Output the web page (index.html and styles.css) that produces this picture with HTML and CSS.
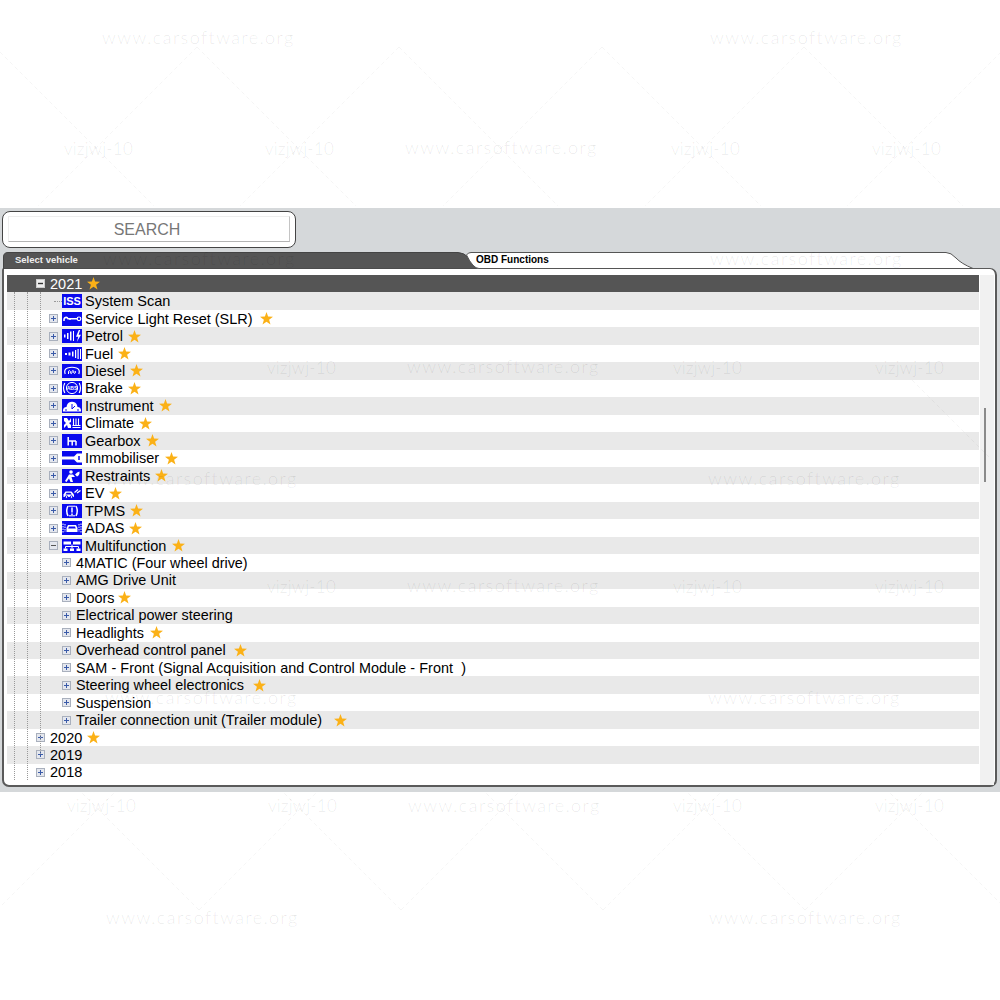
FILE: index.html
```html
<!DOCTYPE html>
<html lang="en">
<head>
<meta charset="utf-8">
<title>OBD vehicle tree</title>
<link rel="stylesheet" href="styles.css">
</head>
<body>
<svg class="sprites" width="0" height="0" aria-hidden="true">
  <symbol id="star" viewBox="0 0 13 13"><polygon points="6.5,0 8.1,4.6 13,4.8 9.1,7.8 10.5,12.5 6.5,9.7 2.5,12.5 3.9,7.8 0,4.8 4.9,4.6"/></symbol>
  <symbol id="plus" viewBox="0 0 9 9"><rect x=".5" y=".5" width="8" height="8" fill="#e4e7ee" stroke="#a9b0bd"/><path d="M2 4.5h5M4.5 2v5" stroke="#3a5aa8" fill="none"/></symbol>
  <symbol id="minus" viewBox="0 0 9 9"><rect x=".5" y=".5" width="8" height="8" fill="#e4e7ee" stroke="#a9b0bd"/><path d="M2 4.5h5" stroke="#555" fill="none"/></symbol>
  <symbol id="minusw" viewBox="0 0 9 9"><rect x=".5" y=".5" width="8" height="8" fill="#eee" stroke="#ccc"/><path d="M2 4.5h5" stroke="#333" stroke-width="1.4" fill="none"/></symbol>
</svg>

<main class="app">
  <div class="search-box"><div class="search-input">SEARCH</div></div>

  <div class="tabs">
    <div class="tab tab-active">
      <svg class="tab-shape" width="478" height="17" viewBox="0 0 478 17"><path d="M.5 17V5Q.5 .5 5 .5H455Q461 .5 466 6T478 17Z" fill="#555" stroke="#444"/></svg>
      <span class="tab-label">Select vehicle</span>
    </div>
    <div class="tab tab-other">
      <svg class="tab-shape" width="508" height="17" viewBox="0 0 508 17"><path d="M.5 3Q2 .5 5 .5H480Q485 .5 490 6T507 16.5H13Q7 16.5 .5 3Z" fill="#fff" stroke="#555"/></svg>
      <span class="tab-label">OBD Functions</span>
    </div>
  </div>

  <section class="panel">
    <div class="tree">
      <div class="guide guide-1"></div>
      <div class="guide guide-2"></div>
      <div class="guide guide-3"></div>

      <div class="row year dark"><svg class="exp"><use href="#minusw"/></svg><span>2021</span><svg class="star"><use href="#star"/></svg></div>

      <div class="row cat alt"><i class="stub"></i><svg class="ico" viewBox="0 0 20 14"><rect width="20" height="14" fill="#0a0aee"/><text x="10" y="11.3" class="ico-txt">ISS</text></svg><span>System Scan</span></div>

      <div class="row cat"><svg class="exp"><use href="#plus"/></svg><svg class="ico" viewBox="0 0 20 14"><rect width="20" height="14" fill="#0a0aee"/><path d="M2 9C1.500 5 5 4.500 6 6.800H15M8 6.800V8" stroke="#fff" stroke-width="1.500" fill="none"/><circle cx="17" cy="6.800" r="1.800" fill="none" stroke="#fff" stroke-width="1.200"/></svg><span>Service Light Reset (SLR)</span><svg class="star g6"><use href="#star"/></svg></div>

      <div class="row cat alt"><svg class="exp"><use href="#plus"/></svg><svg class="ico" viewBox="0 0 20 14"><rect width="20" height="14" fill="#0a0aee"/><path d="M2 5.500h1.500v3H2zM5 4h1.500v6H5zM8 2.500h1.500v9H8zM11 2h1v10h-1z" fill="#fff"/><path d="M16.800 1 14 7.800h2.300L14.800 13 19 5.800h-2.400L18.200 1z" fill="#fff"/></svg><span>Petrol</span><svg class="star g5"><use href="#star"/></svg></div>

      <div class="row cat"><svg class="exp"><use href="#plus"/></svg><svg class="ico" viewBox="0 0 20 14"><rect width="20" height="14" fill="#0a0aee"/><path d="M3 6h2v2H3zM6.500 5.500h2v3h-2zM10 4.500h1.500v5H10zM13 3h1.200v8H13zM15.500 2h1.200v10h-1.200zM18 2h1v10h-1z" fill="#fff"/></svg><span>Fuel</span><svg class="star g5"><use href="#star"/></svg></div>

      <div class="row cat alt"><svg class="exp"><use href="#plus"/></svg><svg class="ico" viewBox="0 0 20 14"><rect width="20" height="14" fill="#0a0aee"/><path d="M3.200 10Q1.500 5.500 5.500 4Q10 2.500 14.500 4Q18.500 5.500 16.800 10" stroke="#fff" stroke-width="1.200" fill="none"/><path d="M6.500 10V7.200Q7.500 5.800 8.300 7.200V9Q9.200 10.200 10 9V7.200Q11 5.800 11.800 7.200V9Q12.500 10 13.300 9V7" stroke="#fff" fill="none"/></svg><span>Diesel</span><svg class="star g5"><use href="#star"/></svg></div>

      <div class="row cat"><svg class="exp"><use href="#plus"/></svg><svg class="ico" viewBox="0 0 20 14"><rect width="20" height="14" fill="#0a0aee"/><circle cx="10" cy="7" r="5.600" fill="none" stroke="#fff"/><path d="M2.800 2Q.200 7 2.800 12M17.200 2Q19.800 7 17.200 12" stroke="#fff" stroke-width="1.200" fill="none"/><text x="10" y="9" class="ico-abs">ABS</text></svg><span>Brake</span><svg class="star g5"><use href="#star"/></svg></div>

      <div class="row cat alt"><svg class="exp"><use href="#plus"/></svg><svg class="ico" viewBox="0 0 20 14"><rect width="20" height="14" fill="#0a0aee"/><path d="M1 12.500V11A3.500 3.500 0 0 1 4.500 8L5 6A5.500 5.500 0 0 1 15 6L15.500 8A3.500 3.500 0 0 1 19 11V12.500Z" fill="#fff"/><path d="M4 12V10M10 10V5M10 10l3-3M16 12V10" stroke="#0a0aee" fill="none"/></svg><span>Instrument</span><svg class="star g5"><use href="#star"/></svg></div>

      <div class="row cat"><svg class="exp"><use href="#plus"/></svg><svg class="ico" viewBox="0 0 20 14"><rect width="20" height="14" fill="#0a0aee"/><path d="M2 2h3l2 3 2-3v4L7 7l2 2v3H6L5 9l-3 3V9l2-2-2-2z" fill="#fff"/><path d="M11.500 2.500v7M14 2.500v7M16.500 2.500v7M10.500 11.500h8M10.500 9.500h8" stroke="#fff" stroke-width="1.100" fill="none"/></svg><span>Climate</span><svg class="star g5"><use href="#star"/></svg></div>

      <div class="row cat alt"><svg class="exp"><use href="#plus"/></svg><svg class="ico" viewBox="0 0 20 14"><rect width="20" height="14" fill="#0a0aee"/><path d="M6.200 3v8.500M6.200 7H14M10.200 7v4.500M14 7v4.500" stroke="#fff" stroke-width="1.500" fill="none"/></svg><span>Gearbox</span><svg class="star g5"><use href="#star"/></svg></div>

      <div class="row cat"><svg class="exp"><use href="#plus"/></svg><svg class="ico" viewBox="0 0 20 14"><rect width="20" height="14" fill="#0a0aee"/><path d="M0 5.500H12L15 2.500H20V11.500H15L12 8.500H0Z" fill="#fff"/><path d="M17 5v4" stroke="#0a0aee" stroke-width="1.500"/></svg><span>Immobiliser</span><svg class="star g6b"><use href="#star"/></svg></div>

      <div class="row cat alt"><svg class="exp"><use href="#plus"/></svg><svg class="ico" viewBox="0 0 20 14"><rect width="20" height="14" fill="#0a0aee"/><circle cx="9" cy="3" r="1.800" fill="#fff"/><path d="M7 5.500H11L13 8H9.500L11 13H8.500L7 9.500 4.500 13 3 12 5.500 8Z" fill="#fff"/><path d="M13 5.500Q15 3 17.500 2.500Q18 6 15 7.500Z" fill="#fff"/></svg><span>Restraints</span><svg class="star g5"><use href="#star"/></svg></div>

      <div class="row cat"><svg class="exp"><use href="#plus"/></svg><svg class="ico" viewBox="0 0 20 14"><rect width="20" height="14" fill="#0a0aee"/><path d="M1.500 11V8.500L3.500 5.500H9.500L12 8.500V11Z" fill="#fff"/><path d="M4.500 6.800H8.500L9.800 8.500H3.500Z" fill="#0a0aee"/><circle cx="4.500" cy="11" r="1.300" fill="#fff" stroke="#0a0aee"/><circle cx="9.500" cy="11" r="1.300" fill="#fff" stroke="#0a0aee"/><path d="M12.500 6.500L16 3.500M15 7L18.500 4.500" stroke="#fff" stroke-width="1.300" fill="none"/></svg><span>EV</span><svg class="star g5"><use href="#star"/></svg></div>

      <div class="row cat alt"><svg class="exp"><use href="#plus"/></svg><svg class="ico" viewBox="0 0 20 14"><rect width="20" height="14" fill="#0a0aee"/><path d="M6 2Q3.500 7 6 12M14 2Q16.500 7 14 12" stroke="#fff" stroke-width="1.500" fill="none"/><path d="M6.500 2.200H13.500M7 11.800H13" stroke="#fff" fill="none"/><path d="M10 3.500v5M10 9.500v1.500" stroke="#fff" stroke-width="1.500" fill="none"/></svg><span>TPMS</span><svg class="star g5"><use href="#star"/></svg></div>

      <div class="row cat"><svg class="exp"><use href="#plus"/></svg><svg class="ico" viewBox="0 0 20 14"><rect width="20" height="14" fill="#0a0aee"/><path d="M6 4H14L15.500 7V11H4.500V7Z" fill="#fff"/><path d="M7 5.500H13L13.800 7.500H6.200Z" fill="#0a0aee"/><path d="M1 2.500V11.500M3 3V11M17 3V11M19 2.500V11.500" stroke="#fff" stroke-dasharray="1.500 1" fill="none"/></svg><span>ADAS</span><svg class="star g4"><use href="#star"/></svg></div>

      <div class="row cat alt"><svg class="exp"><use href="#minus"/></svg><svg class="ico" viewBox="0 0 20 14"><rect width="20" height="14" fill="#0a0aee"/><path d="M1.500 2.500H9V5.500H1.500zM11 2.500H18.500V5.500H11zM1.500 9.500H5.500V12H1.500zM8 9.500H12V12H8zM14.500 9.500H18.500V12H14.500z" fill="#fff"/><path d="M3.500 9.500V7.500H16.500V9.500M10 5.500V9.500" stroke="#fff" fill="none"/></svg><span>Multifunction</span><svg class="star g6b"><use href="#star"/></svg></div>

      <div class="row sub"><svg class="exp"><use href="#plus"/></svg><span>4MATIC (Four wheel drive)</span></div>
      <div class="row sub alt"><svg class="exp"><use href="#plus"/></svg><span>AMG Drive Unit</span></div>
      <div class="row sub"><svg class="exp"><use href="#plus"/></svg><span>Doors</span><svg class="star g4"><use href="#star"/></svg></div>
      <div class="row sub alt"><svg class="exp"><use href="#plus"/></svg><span>Electrical power steering</span></div>
      <div class="row sub"><svg class="exp"><use href="#plus"/></svg><span>Headlights</span><svg class="star g6b"><use href="#star"/></svg></div>
      <div class="row sub alt"><svg class="exp"><use href="#plus"/></svg><span>Overhead control panel</span><svg class="star g8"><use href="#star"/></svg></div>
      <div class="row sub sam"><svg class="exp"><use href="#plus"/></svg><span>SAM - Front (Signal Acquisition and Control Module - Front&nbsp; )</span></div>
      <div class="row sub alt"><svg class="exp"><use href="#plus"/></svg><span>Steering wheel electronics</span><svg class="star g9"><use href="#star"/></svg></div>
      <div class="row sub"><svg class="exp"><use href="#plus"/></svg><span>Suspension</span></div>
      <div class="row sub alt"><svg class="exp"><use href="#plus"/></svg><span>Trailer connection unit (Trailer module)</span><svg class="star g12"><use href="#star"/></svg></div>

      <div class="row year"><svg class="exp"><use href="#plus"/></svg><span>2020</span><svg class="star"><use href="#star"/></svg></div>
      <div class="row year alt"><svg class="exp"><use href="#plus"/></svg><span>2019</span></div>
      <div class="row year"><svg class="exp"><use href="#plus"/></svg><span>2018</span></div>
    </div>
    <div class="scrollbar"><div class="thumb"></div></div>
  </section>
</main>

<svg class="watermark" width="1000" height="1000" viewBox="0 0 1000 1000" aria-hidden="true">
  <path class="wm-line" d="M197 47L38 206M197 47L356 206M399 47L240 206M399 47L558 206M602 47L443 206M602 47L761 206M804 47L645 206M804 47L963 206M-5 47L154 206M1006 47L847 206M199 910L81 792M199 910L317 792M401 910L283 792M401 910L519 792M603 910L485 792M603 910L721 792M805 910L687 792M805 910L923 792M-3 910L115 792M1007 910L889 792M912 380L990 458"/>
  <g class="wm-a">
    <text x="102" y="44">www.carsoftware.org</text><text x="710" y="44">www.carsoftware.org</text>
    <text x="405" y="154">www.carsoftware.org</text><text x="103" y="265">www.carsoftware.org</text>
    <text x="710" y="265">www.carsoftware.org</text><text x="407" y="373">www.carsoftware.org</text>
    <text x="105" y="485">www.carsoftware.org</text><text x="708" y="485">www.carsoftware.org</text>
    <text x="407" y="592">www.carsoftware.org</text><text x="105" y="704">www.carsoftware.org</text>
    <text x="708" y="704">www.carsoftware.org</text><text x="408" y="812">www.carsoftware.org</text>
    <text x="106" y="924">www.carsoftware.org</text><text x="709" y="924">www.carsoftware.org</text>
  </g>
  <g class="wm-b">
    <text x="64" y="155">vizjwj-10</text><text x="265" y="155">vizjwj-10</text><text x="671" y="155">vizjwj-10</text><text x="872" y="155">vizjwj-10</text>
    <text x="267" y="374">vizjwj-10</text><text x="673" y="374">vizjwj-10</text><text x="875" y="374">vizjwj-10</text>
    <text x="267" y="593">vizjwj-10</text><text x="673" y="593">vizjwj-10</text><text x="875" y="593">vizjwj-10</text>
    <text x="67" y="812">vizjwj-10</text><text x="268" y="812">vizjwj-10</text><text x="673" y="812">vizjwj-10</text><text x="875" y="812">vizjwj-10</text>
  </g>
</svg>
</body>
</html>
```
FILE: styles.css
```css
* { box-sizing: border-box; }
html, body { margin: 0; padding: 0; background: #fff; }
body { position: relative; width: 1000px; height: 1000px; overflow: hidden; font-family: "Liberation Sans", Arial, sans-serif; color: #000; }
.sprites { position: absolute; }

.app { margin-top: 208px; height: 584px; background: #d5d8da; padding-top: 3px; display: flex; flex-direction: column; }

.search-box { margin-left: 2px; width: 294px; height: 37px; border: 1.5px solid #444; border-radius: 8px; background: #fff; padding: 4px 5px; }
.search-input { height: 26px; padding-right: 4px; border: 1px solid #eee; border-right-color: #c4c4c4; border-bottom-color: #b4b4b4; font-size: 16px; line-height: 26px; color: #777; text-align: center; }

.tabs { display: flex; height: 17px; margin-top: 4px; margin-left: 3px; flex: none; }
.tab { position: relative; flex: none; height: 17px; }
.tab-active { width: 463px; }
.tab-other { width: 508px; }
.tab-shape { position: absolute; left: 0; top: 0; display: block; }
.tab-active .tab-label { color: #f0f0f0; position: absolute; left: 12px; top: 1px; font-size: 9.5px; }
.tab-other .tab-label { color: #000; position: absolute; left: 10px; top: 1px; }
.tab-label { font-size: 10px; font-weight: 700; line-height: 14px; white-space: nowrap; }

.panel { margin: -1px 3px 0 2px; height: 519px; background: #fff; border: 2px solid #5a5a5a; border-top-width: 1px; border-radius: 2px 7px 7px 7px; padding: 6px 1px 0 3px; display: flex; flex: none; }

.tree { position: relative; width: 972px; flex: none; }
.guide { position: absolute; top: 17px; width: 0; border-left: 1px dotted #999; }
.guide-1 { left: 7px; height: 488px; }
.guide-2 { left: 20px; height: 488px; }
.guide-3 { left: 33px; height: 462px; }

.row { display: flex; align-items: center; height: 17.46px; font-size: 14.5px; white-space: nowrap; }
.row.alt { background: #e9e9e9; }
.row.dark { background: #555; color: #fff; }
.row.year { padding-left: 29px; }
.row.cat { padding-left: 42px; }
.row.sub { padding-left: 55px; font-size: 14.4px; }
.row.sam { word-spacing: .2px; }

.exp { width: 9px; height: 9px; flex: none; display: block; }
.year .exp { margin-right: 5px; }
.sub .exp { margin-right: 5px; }
.cat .exp { margin-right: 4px; }
.stub { width: 8px; margin-left: 4.500px; margin-right: 0.500px; height: 0; border-top: 1px dotted #999; flex: none; }

.ico { width: 20px; height: 14px; flex: none; display: block; margin-right: 3px; }
.ico-txt { font: 700 11px "Liberation Sans", sans-serif; fill: #fff; text-anchor: middle; }
.ico-abs { font: 700 5px "Liberation Sans", sans-serif; fill: #fff; text-anchor: middle; }

.star { width: 13px; height: 13px; flex: none; display: block; fill: #fbb117; margin-left: 5px; }
.star.g4 { margin-left: 4px; }
.star.g5 { margin-left: 5px; }
.star.g6 { margin-left: 7px; }
.star.g6b { margin-left: 6px; }
.star.g8 { margin-left: 8px; }
.star.g9 { margin-left: 9px; }
.star.g12 { margin-left: 12px; }

.scrollbar { width: 14px; margin-left: 1px; height: 510px; background: #f1f1f1; position: relative; flex: none; }
.thumb { position: absolute; left: 4px; top: 133px; width: 2px; height: 74px; background: #8a8a8a; }

.watermark { position: absolute; left: 0; top: 0; pointer-events: none; }
.wm-line { stroke: rgba(0,0,0,.04); stroke-dasharray: 4 3; fill: none; }
.wm-a text { font: 300 18px "Lato", "Liberation Sans", sans-serif; letter-spacing: 1.430px; fill: rgba(0,0,0,.09); }
.wm-b text { font: 300 17px "Lato", "Liberation Sans", sans-serif; letter-spacing: .3px; fill: rgba(0,0,0,.09); }
```
